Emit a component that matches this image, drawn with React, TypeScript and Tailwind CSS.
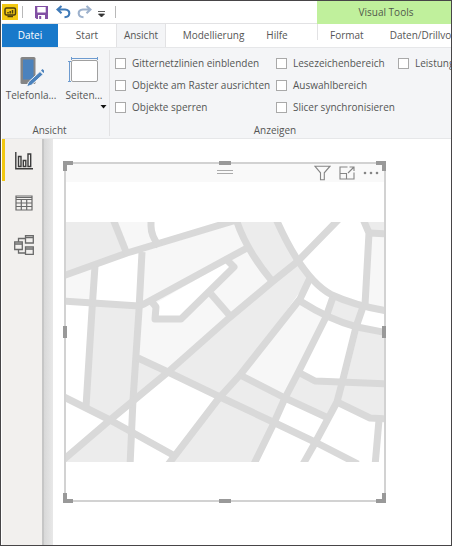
import React from "react";

const ROADS = [
  "M60 277 L127 253 L240 219",
  "M113 219 L127 254",
  "M151 219 V226 Q151 236 159 246",
  "M142 252 L139 310 L133 400 L130 466",
  "M95 266 L92 310 L86 407",
  "M62 301 L93 303 L139 306 L144 304 L247 248",
  "M152 302 L156 307 L155 319 H181 L234 267 L227 260",
  "M211 294 L231 317",
  "M339 219 L297 262 L272 282 L229 318 L168 372 L110 420 L62 461",
  "M236 219 Q246 250 272 281",
  "M276 219 Q303 280 332 295 Q356 306 388 311",
  "M310 278 L300 299 L240 375 L219 398 L167 466",
  "M300 301 Q330 320 357 327 L388 333",
  "M333 297 L326 317 L298 373 L285 398 L273 425 L253 466",
  "M364 304 L356 327 L342 383 L337 402 L315 443 L302 466",
  "M363 219 L369 233 L365 305",
  "M369 233 L388 234",
  "M298 372 L315 381 L388 384",
  "M337 402 L370 418 L388 419",
  "M379 420 L375 466",
  "M240 375 L285 398 L326 417",
  "M138 358 L168 372 L220 397 L273 422 L317 443 L358 464",
  "M62 396 L110 420 L173 455",
];

const DARK_BLOCKS = [
  "65,222 114,222 127,254 65,275",
  "93,303 139,306 133,400 110,420 86,407",
  "65,460 110,420 133,432 130,462 65,462",
  "138,358 168,372 134,400",
  "236,222 247,248 272,280 297,262 276,222",
  "297,262 310,278 240,375 220,397 168,372 272,282",
  "222,397 273,425 254,462 168,462",
  "240,375 285,398 273,425 222,397",
  "333,297 363,306 357,327 327,317",
  "357,327 385,333 385,384 342,383",
  "342,383 385,384 385,419 370,418 337,402",
  "298,372 315,381 342,383 337,402 326,417 285,398",
  "363,222 385,222 385,234 369,233",
];

const LIGHT_BLOCKS = [
  "114,222 151,222 159,246 127,254",
  "65,275 95,266 93,303 65,301",
  "142,252 240,222 247,248 139,306",
  "139,306 247,248 272,280 168,372 138,358",
  "299,299 327,317 285,398 240,375",
  "369,233 385,234 385,310 365,304",
];

function StreetMap() {
  return (
    <svg viewBox="66 222 318 240" className="block w-full" role="img" aria-label="Karte">
      <rect x="65" y="222" width="320" height="240" fill="#fff" />
      {LIGHT_BLOCKS.map((p) => (
        <polygon key={p} points={p} fill="#f7f7f7" />
      ))}
      <polygon points="156,303 228,261 234,267 180,320 155,319" fill="#fff" />
      {DARK_BLOCKS.map((p) => (
        <polygon key={p} points={p} fill="#ececec" />
      ))}
      <g fill="none" stroke="#d9d9d9" strokeWidth="7" strokeLinejoin="round">
        {ROADS.map((d) => (
          <path key={d} d={d} />
        ))}
      </g>
    </svg>
  );
}

function TitleBar() {
  return (
    <div className="flex h-[23px]">
      <div className="flex w-[315px] shrink-0 items-center border-b border-[#e2e2e4]">
        <svg width="16" height="16" viewBox="0 0 16 16" aria-hidden="true">
          <rect width="16" height="16" fill="#f2c811" />
          <rect x="3" y="4" width="10.5" height="7" rx="1.5" fill="none" stroke="#4a3d10" strokeWidth="1.5" />
          <path d="M6 9.500V8M8.200 9.500V7M10.5 9.500V6M5.500 12.5H11" stroke="#4a3d10" strokeWidth="1.5" />
        </svg>
        <span className="ml-1 h-3 w-px bg-[#b8b8b8]" />
        <button type="button" aria-label="Speichern" className="ml-3">
          <svg width="13" height="13" viewBox="0 0 13 13">
            <path d="M0 0H13V13H1.5L0 11.5Z" fill="#8250a4" />
            <path d="M2.3 1H10.7V6.5H2.3Z" fill="#fff" />
            <path d="M3 9H10V13H3Z" fill="#fff" />
            <path d="M4.2 10H6.2V13H4.2Z" fill="#8250a4" />
          </svg>
        </button>
        <button type="button" aria-label="Rückgängig" className="ml-2">
          <svg width="15" height="14" viewBox="0 0 15 14" fill="none" stroke="#3f7ab8" strokeWidth="2.1">
            <path d="M5.5 1L1.5 4.5L5.5 8.3M1.8 4.5H9Q13.5 5 13.3 8.5Q13 12 8.5 12.3" />
          </svg>
        </button>
        <button type="button" aria-label="Wiederholen" className="ml-1.5">
          <svg width="15" height="14" viewBox="0 0 15 14" fill="none" stroke="#9db1cc" strokeWidth="2.1">
            <path d="M9.5 1L13.5 4.5L9.5 8.3M13.2 4.5H6Q1.5 5 1.7 8.5Q2 12 6.5 12.3" />
          </svg>
        </button>
        <button type="button" aria-label="Symbolleiste anpassen" className="ml-1.5 mt-1">
          <svg width="7" height="7" viewBox="0 0 7 7">
            <path d="M0 0.5H7M0.500 3H6.500L3.5 6Z" fill="#333" stroke="#333" strokeWidth="0.8" />
          </svg>
        </button>
        <span className="ml-2.5 h-3 w-px bg-[#b8b8b8]" />
      </div>
      <div className="flex flex-1 items-center justify-center overflow-hidden bg-[#c0f09c] pl-1 text-[#51594c]">
        Visual Tools
      </div>
    </div>
  );
}

function Tabs() {
  return (
    <nav className="flex h-[23px] overflow-hidden whitespace-nowrap">
      <div className="flex w-[315px] shrink-0">
        <button type="button" className="w-14 bg-[#1979ca] text-white">Datei</button>
        <button type="button" className="w-[58px]">Start</button>
        <button type="button" className="w-[50px] border-x border-[#e2e2e4] bg-[#f4f5f7]">Ansicht</button>
        <button type="button" className="w-[95px]">Modellierung</button>
        <button type="button" className="w-8">Hilfe</button>
      </div>
      <span className="h-4 w-px shrink-0 bg-[#e2e2e4]" />
      <button type="button" className="ml-3 shrink-0">Format</button>
      <button type="button" className="ml-[26px] shrink-0">Daten/Drillvo</button>
    </nav>
  );
}

function Check({ label }: { label: string }) {
  return (
    <label className="flex h-[22px] items-center gap-1.5">
      <input type="checkbox" className="size-[11px] shrink-0 appearance-none border border-[#a9a9a9] bg-white" />
      {label}
    </label>
  );
}

function Ribbon() {
  return (
    <div className="flex h-[92px] overflow-hidden whitespace-nowrap border-y border-[#e6e7e9] bg-[#f4f5f7]">
      <section className="my-0.5 flex w-[108px] shrink-0 flex-col border-r border-[#e2e2e4]">
        <div className="flex flex-1 pt-1.5">
          <button type="button" className="flex w-[58px] flex-col items-center">
            <svg width="26" height="32" viewBox="0 0 26 32">
              <rect x="2.5" y="1" width="15" height="27" rx="1.5" fill="#858585" />
              <rect x="5" y="3.500" width="10.500" height="20" fill="#4b82bd" />
              <path d="M8.500 31L10.500 26L22 15.500L25 18.500L13.500 29Z" fill="#4b82bd" stroke="#f4f5f7" strokeWidth="1" />
              <path d="M23 14.500L24.500 13L27 15.500L25.500 17Z" fill="#4b82bd" />
            </svg>
            Telefonla...
          </button>
          <button type="button" className="flex w-12 flex-col items-center">
            <svg width="32" height="32" viewBox="0 0 32 32" fill="none">
              <path d="M3 2.500H30M3.500 1V4M29.500 1V4M1.500 5V26M0 5.500H3M0 25.500H3" stroke="#6d9bd0" />
              <rect x="3.500" y="4.500" width="26" height="21" rx="1.500" fill="#fff" stroke="#a0a0a0" />
            </svg>
            Seiten...
            <svg width="7" height="4" viewBox="0 0 7 4" className="mt-0.5 mr-px self-end">
              <path d="M0.500 0H6.500L3.500 3.500Z" fill="#111" />
            </svg>
          </button>
        </div>
        <h2 className="pr-3 text-center leading-3">Ansicht</h2>
      </section>
      <section className="my-0.5 flex min-w-0 flex-1 flex-col pl-[5px]">
        <div className="flex flex-1 items-start pt-0.5">
          <div className="w-[161px] shrink-0">
            <Check label="Gitternetzlinien einblenden" />
            <Check label="Objekte am Raster ausrichten" />
            <Check label="Objekte sperren" />
          </div>
          <div className="w-[122px] shrink-0">
            <Check label="Lesezeichenbereich" />
            <Check label="Auswahlbereich" />
            <Check label="Slicer synchronisieren" />
          </div>
          <div className="shrink-0">
            <Check label="Leistung" />
          </div>
        </div>
        <h2 className="pr-4 text-center leading-3">Anzeigen</h2>
      </section>
    </div>
  );
}

function ViewSwitcher() {
  return (
    <aside className="flex w-[42px] shrink-0 flex-col border-r-2 border-[#c6c6c6] bg-[#f2f0ee]">
      <button type="button" aria-label="Bericht" className="flex h-[42px] items-center border-l-[3px] border-[#f2c811] pl-2.5 pt-0.5">
        <svg width="18" height="18" viewBox="0 0 18 18" fill="none" stroke="#3c3c3c" strokeWidth="1.4">
          <path d="M0.800 0V16.800H18" />
          <path d="M3.500 4.500H6V14.500H3.500ZM8.300 8.500H10.800V14.500H8.300ZM13 2H15.700V14.500H13Z" />
        </svg>
      </button>
      <button type="button" aria-label="Daten" className="flex h-[42px] items-center pl-[13px] pt-0.5">
        <svg width="18" height="16" viewBox="0 0 18 16" fill="none" stroke="#6a6a6a" strokeWidth="1.200">
          <path d="M1 1H17V15H1ZM1 2.500H17M1 4.500H17M1 8H17M1 11.500H17M6.300 4.500V15M11.700 4.500V15" />
        </svg>
      </button>
      <button type="button" aria-label="Modell" className="flex h-[42px] items-center pl-3 pt-0.5">
        <svg width="20" height="20" viewBox="0 0 20 20" fill="none" stroke="#6a6a6a" strokeWidth="1.300">
          <path d="M0.700 7H8.300V14.500H0.700ZM0.700 9H8.300" />
          <path d="M11.500 0.700H19.300V8H11.500ZM11.500 2.500H19.300" />
          <path d="M11.500 12H19.300V19.300H11.500ZM11.500 14H19.300" />
          <path d="M4.500 7V3.500H11.500M4.500 14.500V18H11.500" />
        </svg>
      </button>
    </aside>
  );
}

function Handles() {
  return (
    <div aria-hidden="true">
      <span className="absolute -left-[3px] -top-[3px] size-2.5 border-l-4 border-t-4 border-[#999]" />
      <span className="absolute -right-0.5 -top-[3px] size-2.5 border-r-4 border-t-4 border-[#999]" />
      <span className="absolute -bottom-[3px] -left-[3px] size-2.5 border-b-4 border-l-4 border-[#999]" />
      <span className="absolute -bottom-[3px] -right-0.5 size-2.5 border-b-4 border-r-4 border-[#999]" />
      <span className="absolute -top-[3px] left-1/2 h-1 w-3 -translate-x-1/2 bg-[#999]" />
      <span className="absolute -bottom-[3px] left-1/2 h-1 w-3 -translate-x-1/2 bg-[#999]" />
      <span className="absolute -left-[3px] top-1/2 h-3 w-1 -translate-y-1/2 bg-[#999]" />
      <span className="absolute -right-0.5 top-1/2 h-3 w-1 -translate-y-1/2 bg-[#999]" />
    </div>
  );
}

function MapVisual() {
  return (
    <article className="relative w-[322px] border-2 border-[#d2d2d2] bg-white pb-[38px]">
      <header className="grid h-[18px] grid-cols-3 bg-[#f9f9f9]">
        <span />
        <span className="mt-1.5 h-1 w-4 justify-self-center border-y border-[#aaa]" />
        <div className="flex items-center justify-end gap-2 pr-[5px]">
          <button type="button" aria-label="Filter">
            <svg width="17" height="16" viewBox="0 0 17 16" fill="none" stroke="#858585" strokeWidth="1.100">
              <path d="M0.800 1.200H16L10.300 7.800V14.800H6.500V7.800Z" />
            </svg>
          </button>
          <button type="button" aria-label="Fokusmodus">
            <svg width="16" height="14" viewBox="0 0 16 14" fill="none" stroke="#858585" strokeWidth="1.100">
              <path d="M8.500 1H1V13H15V6.500M1 7.500H7.500V13M9 7L14.500 1.500M10.500 1H15V5" />
            </svg>
          </button>
          <button type="button" aria-label="Weitere Optionen">
            <svg width="16" height="4" viewBox="0 0 16 4" fill="#858585">
              <circle cx="2" cy="2" r="1.300" />
              <circle cx="8" cy="2" r="1.300" />
              <circle cx="14" cy="2" r="1.300" />
            </svg>
          </button>
        </div>
      </header>
      <div className="pt-10">
        <StreetMap />
      </div>
      <Handles />
    </article>
  );
}

export default function App() {
  return (
    <div className="flex min-h-screen flex-col border border-[#474547] bg-white pl-px font-['Open_Sans','Noto_Sans',sans-serif] text-[10px] text-[#555]">
      <TitleBar />
      <Tabs />
      <Ribbon />
      <div className="flex flex-1">
        <ViewSwitcher />
        <div className="w-[9px] shrink-0 bg-linear-to-r from-[#d8d8d8] to-[#e8e8e8]" />
        <main className="min-w-0 flex-1 overflow-hidden pb-10 pl-[11px] pt-[23px]">
          <MapVisual />
        </main>
      </div>
    </div>
  );
}
